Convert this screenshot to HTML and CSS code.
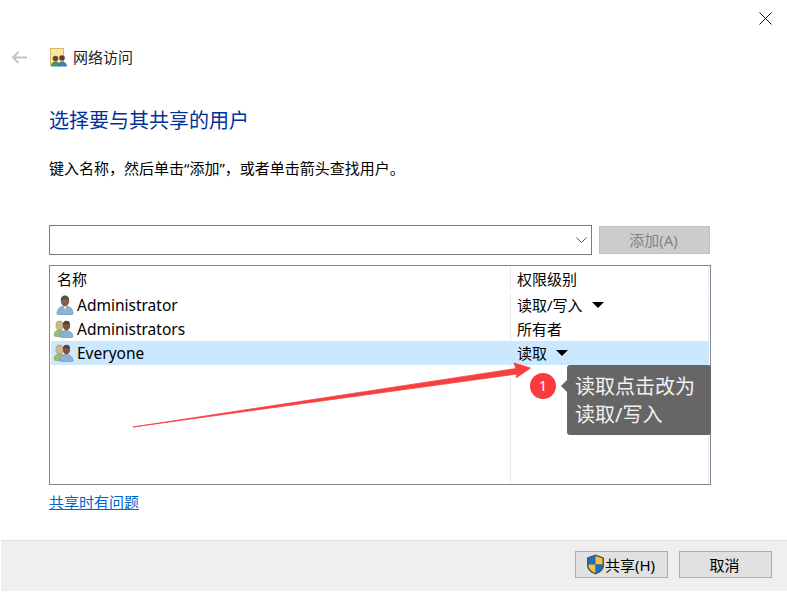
FILE: index.html
```html
<!DOCTYPE html>
<html lang="zh-CN">
<head>
    <meta charset="UTF-8">
    <meta name="viewport" content="width=device-width, initial-scale=1.0">
    <title>网络访问</title>
    <link rel="stylesheet" href="styles.css">
</head>
<body>
    <svg class="defs" width="0" height="0">
        <defs>
            <symbol id="person-blue" viewBox="0 0 18 20">
                <path d="M1 19c0-5 3-8 8-8s8 3 8 8c-3 1.400-13 1.400-16 0z" fill="#8db2d8" stroke="#5b80a8" stroke-width=".6"/>
                <path d="M7.500 11l1.500 4 1.500-4z" fill="#e6eef6"/>
                <ellipse cx="9" cy="6" rx="4.200" ry="5.300" fill="#8a5f44"/>
                <path d="M4.800 5.500c0-3.500 2-5 4.200-5s4.200 1.500 4.200 5C11 3.800 7 3.800 4.800 5.500z" fill="#56504a"/>
            </symbol>
            <symbol id="person-group" viewBox="0 0 21 18">
                <path d="M0 16c0-4 2-6 5.500-6s5.500 2 5.500 6c-2 1-9 1-11 0z" fill="#9dbb78" stroke="#6f9150" stroke-width=".5"/>
                <ellipse cx="5.500" cy="5.500" rx="3.500" ry="4.400" fill="#d4b595" stroke="#a39a5c" stroke-width=".8"/>
                <path d="M6 17c0-4.500 2.500-6.500 6-6.500s7 2 7 6.500c-3 1.200-10 1.200-13 0z" fill="#8db2d8" stroke="#5b80a8" stroke-width=".5"/>
                <ellipse cx="12.500" cy="5.800" rx="3.600" ry="4.700" fill="#7d543a"/>
                <path d="M8.900 5c0-2.800 1.600-4.200 3.600-4.200s3.600 1.400 3.600 4.200c-1.500-1.200-5.300-1.200-7.200 0z" fill="#4b4540"/>
            </symbol>
        </defs>
    </svg>

    <div class="window">
        <div class="close-row">
            <svg class="close-icon" width="13" height="13" viewBox="0 0 13 13"><path d="M.5.500l12 12M12.500.500l-12 12" stroke="#111" stroke-width="1" fill="none"/></svg>
        </div>

        <div class="nav">
            <svg class="back-icon" width="17" height="13" viewBox="0 0 17 13"><path d="M16 6.500H2M7.500 1 2 6.500 7.500 12" stroke="#c4c4c4" stroke-width="2" fill="none"/></svg>
            <svg class="nav-icon" width="17" height="19" viewBox="0 0 17 19">
                <rect x=".5" y=".5" width="13" height="17" fill="#fbe6a2" stroke="#d9bb6a"/>
                <circle cx="5.500" cy="10.500" r="2.800" fill="#6b4a35"/>
                <path d="M1 18.500c0-3.500 2.200-5 4.500-5s4.500 1.500 4.500 5z" fill="#3f9467"/>
                <circle cx="12" cy="10" r="2.800" fill="#5e4332"/>
                <path d="M8 18.500c0-3.500 2-5 4-5s5 1.500 5 5z" fill="#3f7fb5"/>
            </svg>
            <span class="nav-title">网络访问</span>
        </div>

        <div class="content">
            <h1 class="heading">选择要与其共享的用户</h1>
            <p class="desc">键入名称，然后单击“添加”，或者单击箭头查找用户。</p>

            <div class="add-row">
                <div class="combo">
                    <svg width="11" height="6" viewBox="0 0 11 6"><path d="M.5.500l5 5 5-5" stroke="#555" fill="none"/></svg>
                </div>
                <button class="btn-add" type="button">添加(A)</button>
            </div>

            <div class="list-wrap">
                <div class="list">
                    <div class="list-row list-head">
                        <div class="col-name">名称</div>
                        <div class="col-perm">权限级别</div>
                    </div>
                    <div class="list-row">
                        <div class="col-name"><svg class="user-icon" width="21" height="20"><use href="#person-blue" x="2" width="18" height="20"/></svg>Administrator</div>
                        <div class="col-perm">读取/写入<span class="caret"></span></div>
                    </div>
                    <div class="list-row">
                        <div class="col-name"><svg class="user-icon" width="21" height="18"><use href="#person-group"/></svg>Administrators</div>
                        <div class="col-perm">所有者</div>
                    </div>
                    <div class="list-row selected">
                        <div class="col-name"><svg class="user-icon" width="21" height="18"><use href="#person-group"/></svg>Everyone</div>
                        <div class="col-perm">读取<span class="caret"></span></div>
                    </div>
                    <div class="list-rest">
                        <div class="col-name"></div>
                        <div class="col-perm"></div>
                    </div>
                </div>

                <!-- annotation drawn over the list -->
                <svg class="note-arrow" width="490" height="70" viewBox="0 0 490 70">
                    <path d="M84 67 467 8.500 465 3 481.500 8 467 18 468 14z" fill="#f6403f" stroke="#f6403f" stroke-width=".8" stroke-linejoin="round"/>
                </svg>
                <div class="note-badge">1</div>
                <div class="note-tip">读取点击改为<br>读取/写入</div>
            </div>

            <a class="help-link" href="#">共享时有问题</a>
        </div>

        <div class="footer">
            <button class="btn btn-share" type="button">
                <svg class="shield" width="19" height="21" viewBox="0 0 19 21">
                    <path d="M9.500.500 18 3.500V11c0 5-4 8-8.500 9.500C5 19 1 16 1 11V3.500z" fill="#4a5560"/>
                    <path d="M9.500 2 2.500 4.500V10.500H9.500z" fill="#1b6fc9"/>
                    <path d="M9.500 2 16.500 4.500V10.500H9.500z" fill="#f7c33c"/>
                    <path d="M2.500 10.500H9.500V19C5.500 17.500 2.500 15 2.500 10.500z" fill="#f7c33c"/>
                    <path d="M16.500 10.500H9.500V19C13.500 17.500 16.500 15 16.500 10.500z" fill="#1b6fc9"/>
                </svg>共享(H)
            </button>
            <button class="btn btn-cancel" type="button">取消</button>
        </div>
    </div>
</body>
</html>
```

FILE: styles.css
```css
html, body {
    margin: 0;
    padding: 0;
    background-color: #fff;
}

body {
    font-family: "Noto Sans", "Noto Sans CJK SC", sans-serif;
    font-size: 15px;
    color: #000;
    overflow: hidden;
}

.defs {
    display: block;
    height: 0;
}

.window {
    width: 787px;
    height: 592px;
    display: flex;
    flex-direction: column;
}

.close-row {
    height: 48px;
    display: flex;
    justify-content: flex-end;
    padding: 12px 15px 0 0;
    box-sizing: border-box;
}

.close-icon {
    display: block;
}

.nav {
    height: 19px;
    display: flex;
    align-items: center;
    padding-left: 11px;
}

.back-icon {
    margin-right: 22px;
}

.nav-icon {
    margin-right: 6px;
}

.nav-title {
    color: #222;
    line-height: 19px;
}

.content {
    flex: 1;
    padding: 0 76px 0 49px;
    min-height: 0;
}

.heading {
    margin: 41px 0 0;
    font-size: 20px;
    line-height: 26px;
    font-weight: normal;
    color: #003399;
}

.desc {
    margin: 24px 0 0;
    line-height: 20px;
}

.add-row {
    display: flex;
    margin-top: 47px;
    gap: 7px;
    align-items: center;
}

.combo {
    width: 543px;
    height: 30px;
    box-sizing: border-box;
    border: 1px solid #7a7a7a;
    display: flex;
    align-items: center;
    justify-content: flex-end;
    padding-right: 4px;
}

.btn-add {
    width: 111px;
    height: 28px;
    box-sizing: border-box;
    border: 1px solid #bfbfbf;
    background-color: #ccc;
    color: #838383;
    font: inherit;
    padding: 0 2px 2px 0;
}

.list-wrap {
    position: relative;
    margin-top: 10px;
    width: 662px;
}

.list {
    height: 220px;
    box-sizing: border-box;
    border: 1px solid #828790;
    padding: 0 1px;
    display: flex;
    flex-direction: column;
}

.list-row {
    display: flex;
    height: 24px;
    line-height: 24px;
    flex-shrink: 0;
}

.list-head {
    height: 27px;
    padding-bottom: 2px;
    box-sizing: border-box;
}

.list-rest {
    display: flex;
    flex: 1;
}

.col-name {
    width: 459px;
    padding-left: 3px;
    display: flex;
    align-items: center;
    font-size: 15.5px;
    box-sizing: border-box;
}

.list-head .col-name {
    font-size: 15px;
    padding-left: 6px;
}

.col-perm {
    flex: 1;
    padding-left: 6px;
    border-left: 1px solid #e3ecf6;
    border-right: 1px solid #e3ecf6;
    display: flex;
    align-items: center;
}

.user-icon {
    margin-right: 2px;
    display: block;
    flex-shrink: 0;
}

.selected {
    background-color: #cce8ff;
}

.selected .col-perm {
    border-color: transparent;
}

.caret {
    width: 0;
    height: 0;
    margin-left: 9px;
    border-left: 6px solid transparent;
    border-right: 6px solid transparent;
    border-top: 6px solid #000;
}

.note-arrow {
    position: absolute;
    left: 0;
    top: 95px;
    overflow: visible;
}

.note-badge {
    position: absolute;
    left: 481px;
    top: 108px;
    width: 26px;
    height: 26px;
    border-radius: 50%;
    background-color: #f93a3e;
    color: #fff;
    font-size: 14px;
    line-height: 26px;
    text-align: center;
}

.note-tip {
    position: absolute;
    left: 518px;
    top: 100px;
    width: 144px;
    height: 70px;
    box-sizing: border-box;
    padding: 8px 0 0 8px;
    background-color: #666;
    border-radius: 3px;
    color: #f2f2f2;
    font-size: 20px;
    line-height: 28px;
}

.note-tip::before {
    content: "";
    position: absolute;
    left: -6px;
    top: 15px;
    border-top: 6px solid transparent;
    border-bottom: 6px solid transparent;
    border-right: 6px solid #666;
}

.help-link {
    display: inline-block;
    margin-top: 7px;
    line-height: 20px;
    color: #0066cc;
}

.footer {
    height: 51px;
    margin-left: 1px;
    box-sizing: border-box;
    border-top: 1px solid #dfdfdf;
    background-color: #efefef;
    display: flex;
    justify-content: flex-end;
    gap: 11px;
    padding: 10px 15px 0 0;
    margin-bottom: 1px;
}

.btn {
    width: 93px;
    height: 27px;
    box-sizing: border-box;
    border: 1px solid #adadad;
    background-color: #e1e1e1;
    font: inherit;
    padding: 0;
    display: flex;
    align-items: center;
    justify-content: center;
}

.btn-share {
    padding-right: 2px;
}

.btn-cancel {
    padding-right: 2px;
}
```
